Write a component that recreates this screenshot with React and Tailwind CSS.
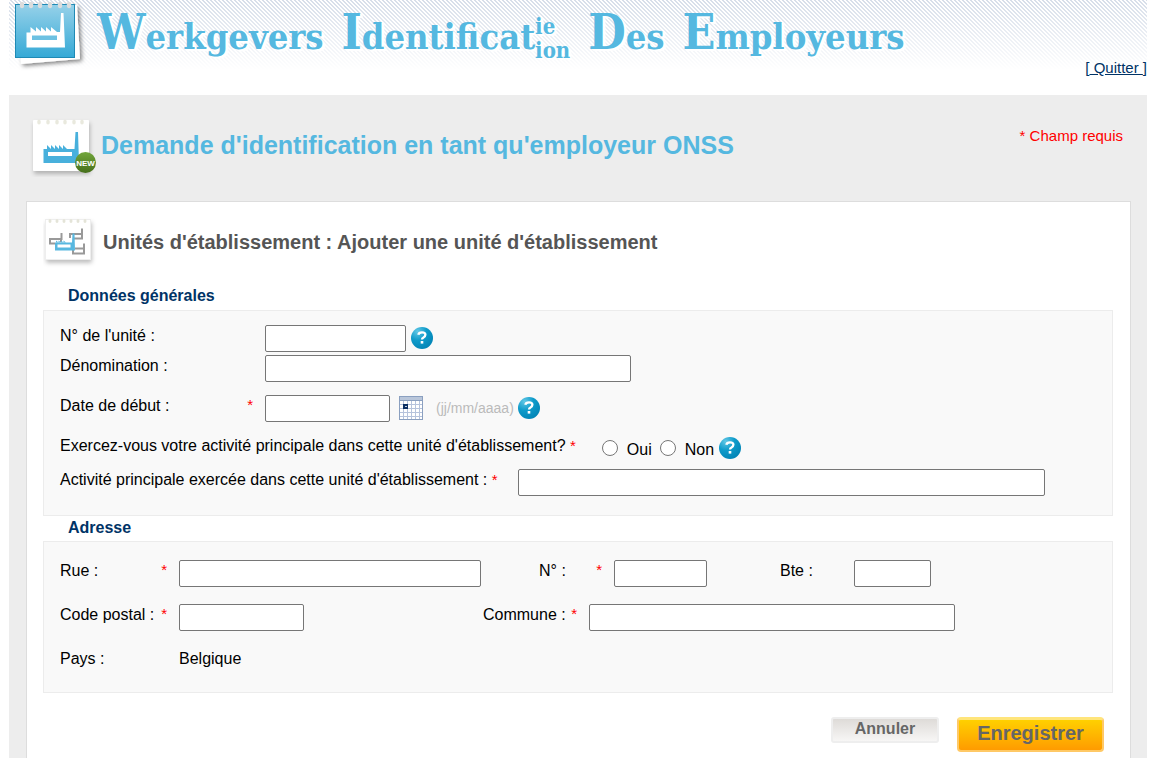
import React from "react";

const inputClass = "h-[27px] rounded-[2px] border border-[#767676] bg-white px-1 text-base";

const Required = () => <span className="text-[15px] text-[#f00]">*</span>;

const AppLogo = () => (
  <svg width="80" height="72" viewBox="0 0 80 72" aria-hidden="true">
    <defs>
      <linearGradient id="logoBlue" x1="0" y1="0" x2="0" y2="1">
        <stop offset="0" stopColor="#96d1e9" />
        <stop offset="1" stopColor="#35a9d6" />
      </linearGradient>
      <filter id="logoShadow" x="-20%" y="-20%" width="150%" height="150%">
        <feDropShadow dx="2" dy="2" stdDeviation="2" floodColor="#000" floodOpacity="0.5" />
      </filter>
    </defs>
    <path d="M9 6 68 5 71 59 12 64Z" fill="#fff" filter="url(#logoShadow)" />
    <rect x="6.500" y="4.500" width="59" height="53" fill="url(#logoBlue)" stroke="#1f8ab5" />
    {[13, 22, 31, 41, 51, 60].map((x) => (
      <ellipse key={x} cx={x} cy="5" rx="2.200" ry="3.200" fill="#dcdcdc" />
    ))}
    <path
      d="M17.500 47.500V32.500H21.500V27L27 31.500V27L32 31.500V27L37 31.500V27L42 31.500V27L48 32H51L52 13H54.500L56 47.500Z"
      fill="#fff"
    />
    <rect x="23" y="35.500" width="25" height="4.500" fill="#6cc1e2" />
  </svg>
);

const RequestIcon = () => (
  <svg width="67" height="64" viewBox="0 0 67 64" aria-hidden="true">
    <defs>
      <filter id="cardShadow" x="-20%" y="-20%" width="150%" height="150%">
        <feDropShadow dx="1" dy="3" stdDeviation="2" floodColor="#000" floodOpacity="0.25" />
      </filter>
      <linearGradient id="badgeGreen" x1="0" y1="0" x2="0" y2="1">
        <stop offset="0" stopColor="#72a63c" />
        <stop offset="1" stopColor="#466f1b" />
      </linearGradient>
    </defs>
    <rect x="3" y="7" width="56" height="51" rx="1" fill="#fff" filter="url(#cardShadow)" />
    {[9, 18, 27, 35, 44, 52].map((x) => (
      <ellipse key={x} cx={x} cy="9" rx="1.800" ry="2.500" fill="#e9e9de" />
    ))}
    <path
      d="M13.500 50V36H17V32L21 36V32L25 36V32L29 36V32L33 36V32L37 36H44.500L45.500 19H48L49 50Z"
      fill="#48b0dc"
    />
    <rect x="18" y="39" width="24" height="4" fill="#fff" />
    <circle cx="55.500" cy="49.500" r="10.500" fill="url(#badgeGreen)" />
    <text
      x="55.500"
      y="52.500"
      textAnchor="middle"
      fontFamily="Liberation Sans, sans-serif"
      fontSize="8"
      fontWeight="bold"
      fill="#fff"
    >
      NEW
    </text>
  </svg>
);

const UnitsIcon = () => (
  <svg width="58" height="54" viewBox="0 0 58 54" aria-hidden="true">
    <rect x="2" y="4" width="46" height="41" rx="2" fill="#fff" filter="url(#cardShadow)" />
    <rect x="2.500" y="4.500" width="45" height="40" fill="#fff" stroke="#eee" />
    {[7, 14, 21, 28, 35, 42].map((x) => (
      <ellipse key={x} cx={x} cy="6" rx="1.500" ry="2" fill="#e4e4d8" />
    ))}
    <g fill="none" stroke="#999" strokeWidth="2">
      <path d="M12 28.500H7V24H18.500V18M18 24V27" />
      <path d="M31 23.500H39V13.500M27 23V19H38.500" />
      <path d="M30 34V38.500H41V28.500M32 33.500H41" />
    </g>
    <path d="M12 35.500V27.500H29L29.500 18.500H31.500L32 35.500Z" fill="#58b8e0" />
    <path d="M13 27.500V25.500L15.500 27.500V25.500L18 27.500V25.500L20.500 27.500V25.500L23 27.500Z" fill="#58b8e0" />
    <rect x="14.500" y="29.500" width="13" height="3" fill="#fff" />
  </svg>
);

const HelpButton = () => (
  <button type="button" aria-label="Aide" className="size-6 shrink-0">
    <svg width="24" height="24" viewBox="0 0 24 24" aria-hidden="true">
      <defs>
        <radialGradient id="helpBlue" cx="0.3" cy="0.2" r="0.9">
          <stop offset="0" stopColor="#62c8e6" />
          <stop offset="0.45" stopColor="#0f9bca" />
          <stop offset="1" stopColor="#0082b4" />
        </radialGradient>
      </defs>
      <circle cx="12" cy="12" r="11" fill="url(#helpBlue)" />
      <path
        d="M8.300 8.800Q8.700 6.300 12 6.300 15.400 6.300 15.400 8.800 15.400 10.400 13.500 11.400 12 12.200 12 13.600"
        fill="none"
        stroke="#fff"
        strokeWidth="2.300"
      />
      <rect x="10.700" y="15" width="2.600" height="2.600" fill="#fff" />
    </svg>
  </button>
);

const CalendarButton = () => (
  <button type="button" aria-label="Calendrier" className="size-6 shrink-0">
    <svg width="24" height="24" viewBox="0 0 24 24" shapeRendering="crispEdges" aria-hidden="true">
      <rect width="24" height="24" fill="#8ba0c0" />
      <rect x="1" y="1" width="22" height="3" fill="#b9c6da" />
      <rect x="1" y="5" width="22" height="18" fill="#fff" />
      <path
        d="M4.500 5V23M8.500 5V23M12.500 5V23M16.500 5V23M20.500 5V23M1 8.500H23M1 12.500H23M1 16.500H23M1 20.500H23"
        stroke="#b6c3dc"
      />
      <rect x="4" y="8" width="5" height="5" fill="#0b2f63" />
      <rect x="6" y="10" width="2" height="1" fill="#c5d2e6" />
    </svg>
  </button>
);

const Title = () => (
  <h1 className="flex h-16 items-baseline gap-[18px] font-['DejaVu_Serif_Condensed','DejaVu_Serif',serif] text-4xl leading-16 font-bold whitespace-nowrap text-[#55b8e0] [text-shadow:2px_1px_0_#fff,3px_2px_1px_#fff]">
    <span><span className="text-5xl leading-16">W</span>erkgevers</span>
    <span className="flex items-baseline">
      <span><span className="text-5xl leading-16">I</span>dentificat</span>
      <span className="flex flex-col self-center pt-2 text-[22px] leading-6">
        <span>ie</span>
        <span>ion</span>
      </span>
    </span>
    <span><span className="text-5xl leading-16">D</span>es</span>
    <span><span className="text-5xl leading-16">E</span>mployeurs</span>
  </h1>
);

const GeneralData = () => (
  <fieldset>
    <legend className="ml-[25px] h-6 text-base leading-5 font-bold text-[#003366]">Données générales</legend>
    <div className="border border-[#ececec] bg-[#f9f9f9] px-4 pt-3 pb-[18px]">
      <div className="flex h-[30px] items-center">
        <label htmlFor="unit" className="w-[205px] pb-1">N° de l'unité :</label>
        <input id="unit" className={`${inputClass} w-[141px]`} />
        <span className="ml-1 flex"><HelpButton /></span>
      </div>
      <div className="flex h-[30px] items-center">
        <label htmlFor="name" className="w-[205px] pb-1">Dénomination :</label>
        <input id="name" className={`${inputClass} w-[366px]`} />
      </div>
      <div className="mt-2.5 flex h-[30px] items-center">
        <label htmlFor="start" className="flex w-[205px] justify-between pr-3 pb-1">
          Date de début : <Required />
        </label>
        <input id="start" className={`${inputClass} w-[125px]`} />
        <span className="ml-[9px] flex"><CalendarButton /></span>
        <span className="mr-[3px] ml-[13px] text-sm text-[#bbb]">(jj/mm/aaaa)</span>
        <HelpButton />
      </div>
      <div className="mt-2.5 flex h-[30px] items-center">
        <span id="main-unit" className="mr-[26px] pb-1">
          Exercez-vous votre activité principale dans cette unité d'établissement? <Required />
        </span>
        <span role="radiogroup" aria-labelledby="main-unit" className="flex items-center">
          <input id="yes" type="radio" name="main" className="mr-[9px] size-4" />
          <label htmlFor="yes" className="mr-2 pt-1">Oui</label>
          <input id="no" type="radio" name="main" className="mr-[9px] size-4" />
          <label htmlFor="no" className="mr-1 pt-1">Non</label>
        </span>
        <HelpButton />
      </div>
      <div className="mt-1 flex h-[30px] items-center">
        <label htmlFor="activity" className="mr-5 pb-1">
          Activité principale exercée dans cette unité d'établissement : <Required />
        </label>
        <input id="activity" className={`${inputClass} w-[527px]`} />
      </div>
    </div>
  </fieldset>
);

const Address = () => (
  <fieldset>
    <legend className="ml-[25px] h-[25px] text-base leading-6 font-bold text-[#003366]">Adresse</legend>
    <div className="border border-[#ececec] bg-[#f9f9f9] px-4 pt-4 pb-4">
      <div className="flex h-[30px] items-center">
        <label htmlFor="street" className="flex w-[119px] justify-between pr-3 pb-1">
          Rue : <Required />
        </label>
        <input id="street" className={`${inputClass} w-[302px]`} />
        <label htmlFor="number" className="ml-[58px] flex w-[75px] justify-between pr-3 pb-1">
          N° : <Required />
        </label>
        <input id="number" className={`${inputClass} w-[93px]`} />
        <label htmlFor="box" className="ml-[73px] w-[74px] pb-1">Bte :</label>
        <input id="box" className={`${inputClass} w-[77px]`} />
      </div>
      <div className="mt-3.5 flex h-[30px] items-center">
        <label htmlFor="zip" className="flex w-[119px] justify-between pr-3 pb-1">
          Code postal : <Required />
        </label>
        <input id="zip" className={`${inputClass} w-[125px]`} />
        <label htmlFor="city" className="ml-[179px] flex w-[106px] justify-between pr-3 pb-1">
          Commune : <Required />
        </label>
        <input id="city" className={`${inputClass} w-[366px]`} />
      </div>
      <div className="mt-3.5 flex h-[30px] items-center pb-1">
        <span className="w-[119px]">Pays :</span>
        <span>Belgique</span>
      </div>
    </div>
  </fieldset>
);

const App = () => {
  return (
    <div className="min-h-screen bg-white pr-[7px] pl-[9px] font-['Liberation_Sans',Arial,sans-serif] text-base text-black">
      <header className="flex h-[95px] items-start justify-between bg-[linear-gradient(to_bottom,#ffffff33,#fff_70px),linear-gradient(45deg,#cdd6e4_25%,#fff_25%,#fff_50%,#cdd6e4_50%,#cdd6e4_75%,#fff_75%)] bg-size-[100%_100%,4px_4px]">
        <div className="flex items-start gap-2">
          <AppLogo />
          <Title />
        </div>
        <p className="pt-[58px] text-[15px] leading-5 text-[#003366]">
          [<a href="#quit" className="underline">&nbsp;Quitter&nbsp;</a>]
        </p>
      </header>

      <main className="bg-[#ededed] pr-4 pl-[17px] pb-8">
        <div className="flex h-[106px] items-start justify-between pt-[18px]">
          <div className="flex items-center gap-1 pl-1">
            <RequestIcon />
            <h2 className="text-[25px] leading-8 font-bold text-[#55b8e0]">
              Demande d'identification en tant qu'employeur ONSS
            </h2>
          </div>
          <p className="pt-[13px] pr-2 text-[15px] leading-5 text-[#f00]">* Champ requis</p>
        </div>

        <form className="border border-[#ddd] bg-white pr-[17px] pl-4 pt-[13px] pb-8" onSubmit={(e) => e.preventDefault()}>
          <div className="mb-[17px] flex items-center gap-0.5">
            <UnitsIcon />
            <h3 className="text-xl font-bold text-[#555]">Unités d'établissement : Ajouter une unité d'établissement</h3>
          </div>
          <GeneralData />
          <Address />
          <div className="mt-6 flex items-start justify-end gap-[18px] pr-[9px] font-bold text-[#666]">
            <button
              type="button"
              className="h-[26px] w-[108px] rounded-[3px] border-2 border-[#eee] bg-linear-to-b from-[#dedbd8] to-[#f7f6f5] pb-1 leading-5"
            >
              Annuler
            </button>
            <button
              type="submit"
              className="h-[35px] w-[147px] rounded-[4px] border-2 border-t-[3px] border-[#ffc966] border-t-[#ffe57a] bg-linear-to-b from-[#ffd000] to-[#ff9b00] pb-1 text-xl leading-6"
            >
              Enregistrer
            </button>
          </div>
        </form>
      </main>
    </div>
  );
};

export default App;
